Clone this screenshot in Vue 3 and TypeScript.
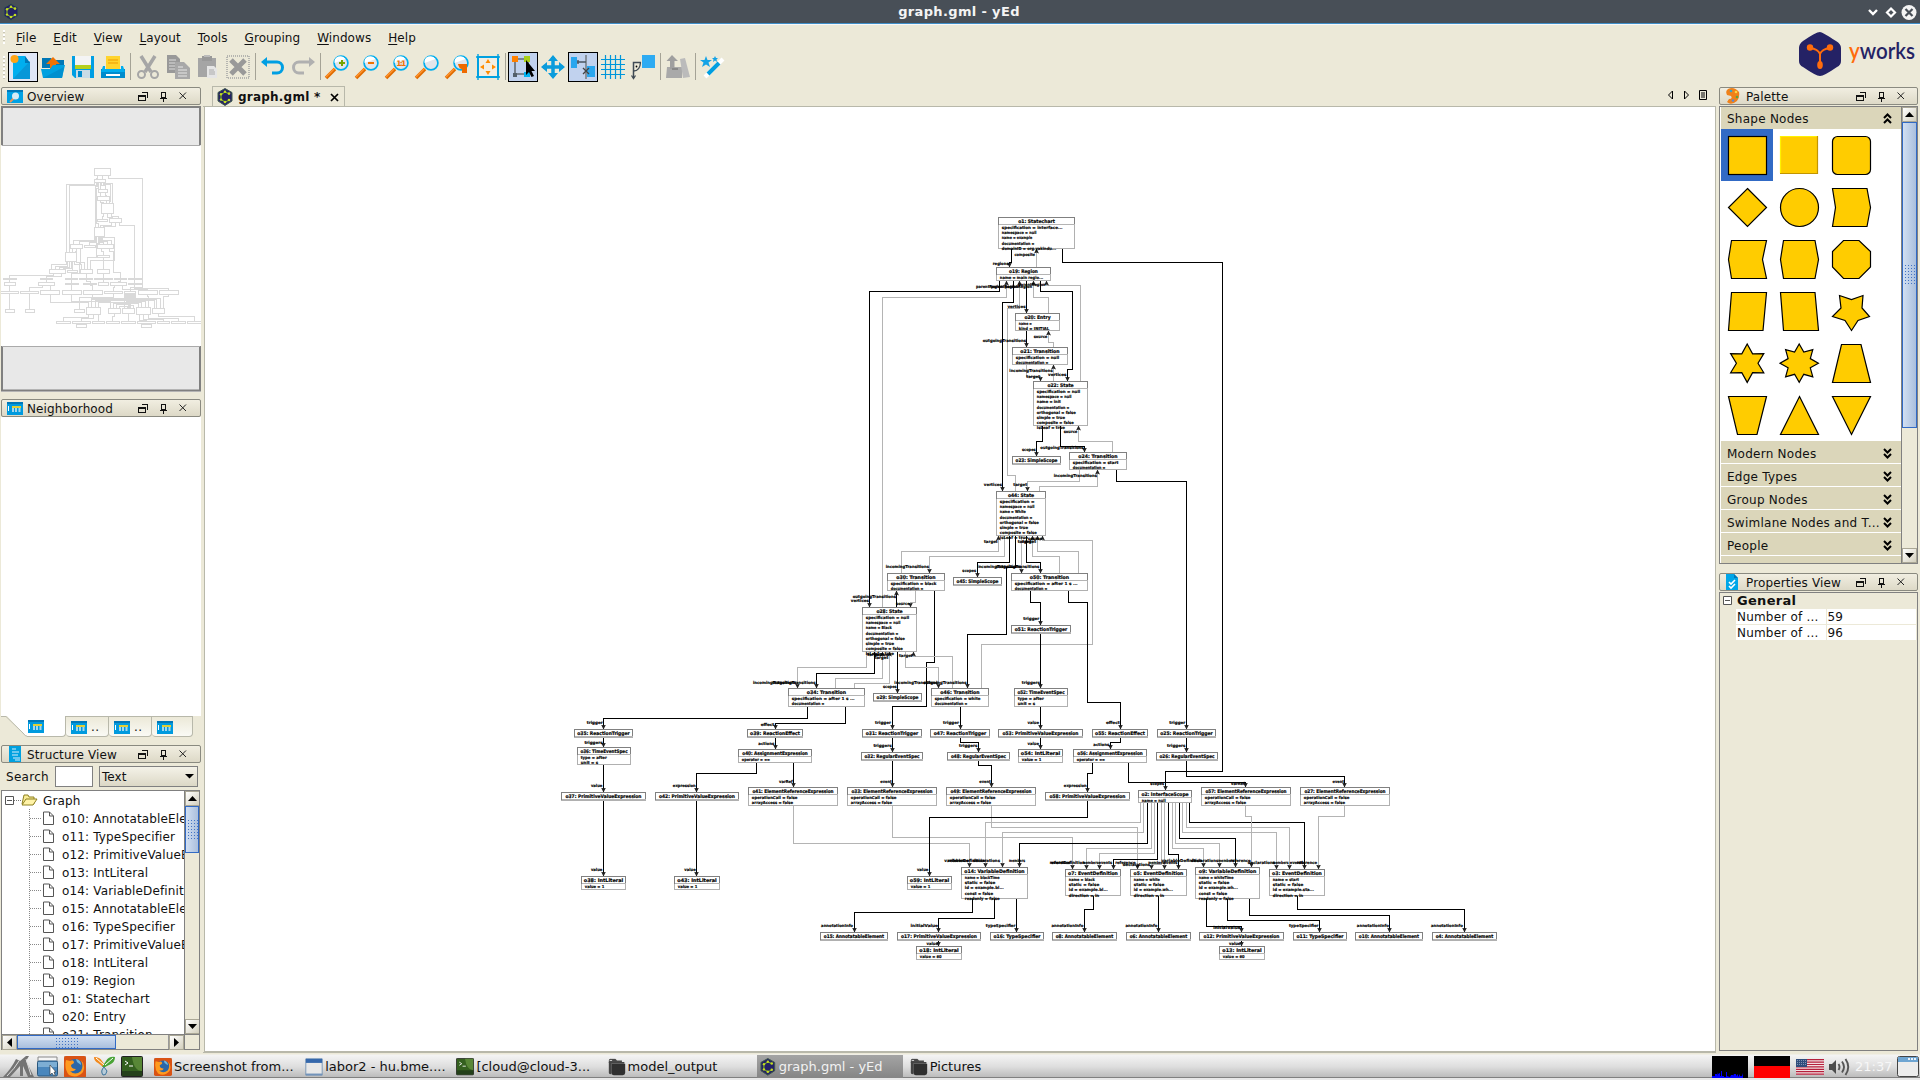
<script setup lang="ts">
interface Cluster {
  ox: number
  oy: number
  sx: number
  nodes: [number, number, number, number, string, string?][]
  edges: string[]
  labels: [string, number, number][]
}

const state = (spec: string, name: string) =>
  `specification = ${spec}|namespace = null|name = ${name}|documentation =|orthogonal = false|simple = true|composite = false|isLeaf = true`
const ref = 'operationCall = false|arrayAccess = false'

// Each cluster keeps its own origin and unit grid; edges marked "k" are containment (black), "g" are references (grey).
const clusters: Cluster[] = [
  {
    ox: 860, oy: 200, sx: 3,
    nodes: [
      [415, 52, 643, 146, 'o1: Statechart', 'specification = interface...|namespace = null|name = example|documentation =|domainID = org.yakindu...'],
      [409, 203, 571, 241, 'o19: Region', 'name = main regio...'],
      [466, 340, 598, 391, 'o20: Entry', 'name =|kind = INITIAL'],
      [457, 442, 622, 493, 'o21: Transition', 'specification = null|documentation ='],
      [520, 544, 682, 676, 'o22: State', state('null', 'init')],
      [457, 770, 602, 793, 'o23: SimpleScope'],
      [628, 757, 799, 808, 'o24: Transition', 'specification = start|documentation ='],
      [409, 874, 556, 1006, 'o44: State', state('', 'White')],
    ],
    edges: [
      'k455,146 455,188 449,188 449,203',
      'k607,146 607,187 1087,187 1087,1714 916,1714 916,1771',
      'k418,241 418,274 28,274 28,1222',
      'k461,241 461,307 427,307 427,874',
      'k500,241 500,340',
      'k541,241 541,274 637,274 637,508 622,508 622,544',
      'k500,391 500,442',
      'k548,676 548,724 529,724 529,770',
      'k601,676 601,739 673,739 673,757',
      'k769,808 769,844 979,844 979,1588',
      'g529,203 529,146',
      'g466,874 466,826 442,826 442,325 479,325 479,241',
      'g565,340 565,292 520,292 520,241',
      'g661,544 661,256 560,256 560,241',
      'g580,442 580,427 565,427 565,391',
      'g500,493 500,529 541,529 541,544',
      'g580,544 580,493',
      'g757,757 757,724 655,724 655,676',
      'g658,808 658,844 502,844 502,874',
      'g538,874 538,859 713,859 713,808',
      'g67,1222 67,292 439,292 439,241',
    ],
    labels: [
      ['composite', 525, 167], ['regions', 446, 195], ['parentRegion', 430, 264], ['parentRegion', 475, 264], ['parentRegion', 516, 264], ['parentRegion', 557, 257],
      ['vertices', 497, 324], ['source', 562, 413], ['outgoingTransitions', 498, 425], ['incomingTransitions', 578, 515], ['vertices', 619, 528], ['target', 540, 533],
      ['source', 652, 698], ['outgoingTransitions', 671, 746], ['scopes', 527, 752], ['incomingTransitions', 711, 830], ['vertices', 426, 857], ['target', 501, 857],
      ['target', 413, 1028], ['source', 545, 1019], ['target', 514, 1028], ['target', 528, 1028],
    ],
  },
  {
    ox: 760, oy: 540, sx: 3,
    nodes: [
      [382, 100, 553, 151, 'o30: Transition', 'specification = black|documentation ='],
      [580, 112, 724, 135, 'o45: SimpleScope'],
      [754, 100, 982, 151, 'o50: Transition', 'specification = after 1 s ...|documentation ='],
      [307, 202, 469, 334, 'o28: State', state('null', 'Black')],
      [754, 256, 931, 280, 'o51: ReactionTrigger'],
      [85, 445, 313, 499, 'o34: Transition', 'specification = after 1 s ...|documentation ='],
      [340, 460, 484, 483, 'o29: SimpleScope'],
      [514, 445, 685, 499, 'o46: Transition', 'specification = white|documentation ='],
      [763, 445, 922, 499, 'o52: TimeEventSpec', 'type = after|unit = s'],
      [307, 568, 484, 592, 'o31: ReactionTrigger'],
      [511, 568, 688, 592, 'o47: ReactionTrigger'],
      [715, 568, 967, 592, 'o53: PrimitiveValueExpression'],
      [997, 568, 1162, 592, 'o55: ReactionEffect'],
      [1192, 568, 1366, 592, 'o25: ReactionTrigger'],
      [304, 637, 487, 661, 'o32: RegularEventSpec'],
      [562, 637, 748, 661, 'o48: RegularEventSpec'],
      [775, 628, 907, 667, 'o54: IntLiteral', 'value = 1'],
      [940, 628, 1159, 667, 'o56: AssignmentExpression', 'operator = =='],
      [1189, 637, 1372, 661, 'o26: RegularEventSpec'],
      [262, 742, 529, 796, 'o33: ElementReferenceExpression', ref],
      [559, 742, 826, 796, 'o49: ElementReferenceExpression', ref],
      [856, 757, 1108, 781, 'o58: PrimitiveValueExpression'],
      [1135, 751, 1294, 787, 'o2: InterfaceScope', 'name = null'],
    ],
    edges: [
      'g424,100 424,34 715,34 715,-14', 'g733,-14 733,49 509,49 509,100', 'k748,-14 748,67 652,67 652,112',
      'k766,-14 766,81 740,81 740,283 622,283 622,445', 'g784,-14 784,100', 'k799,-14 799,67 841,67 841,100',
      'g898,100 898,49 817,49 817,-14', 'g955,100 955,34 832,34 832,-14', 'g664,445 664,313 997,313 997,1 847,1 847,-14',
      'k410,202 410,151', 'g466,151 466,187 451,187 451,202', 'k523,151 523,367 500,367 500,499 397,499 397,568',
      'k811,151 811,187 841,187 841,256', 'k925,151 925,187 982,187 982,487 1081,487 1081,568', 'k841,280 841,445',
      'g319,334 319,382 112,382 112,445', 'k343,334 343,400 169,400 169,445', 'g226,445 226,415 367,415 367,334',
      'g283,445 283,430 388,430 388,334', 'k412,334 412,460', 'g436,334 436,382 535,382 535,445', 'g577,445 577,349 460,349 460,334',
      'k841,499 841,568', 'k601,499 601,568', 'k397,592 397,637', 'k601,592 601,607 655,607 655,637', 'k841,592 841,628',
      'k1081,592 1081,607 1051,607 1051,628', 'k1279,592 1279,637', 'k397,661 397,742', 'k655,661 655,676 694,676 694,742',
      'k997,667 997,700 982,700 982,757', 'k1105,667 1105,727 1457,727 1457,742', 'k1279,661 1279,709 1754,709 1754,742',
    ],
    labels: [
      ['incomingTransitions', 507, 83], ['scopes', 648, 95], ['incomingTransitions', 782, 83], ['outgoingTransitions', 838, 83],
      ['outgoingTransitions', 408, 173], ['vertices', 327, 186], ['source', 449, 194], ['trigger', 838, 240],
      ['target', 363, 347], ['source', 385, 347], ['target', 385, 356], ['target', 458, 350], ['incomingTransitions', 109, 432], ['outgoingTransitions', 167, 432],
      ['scopes', 410, 443], ['incomingTransitions', 533, 432], ['outgoingTransitions', 620, 432], ['triggers', 840, 432],
      ['trigger', 393, 552], ['trigger', 597, 552], ['value', 837, 552], ['effect', 1079, 552], ['trigger', 1276, 552],
      ['triggers', 395, 620], ['triggers', 652, 620], ['value', 837, 614], ['actions', 1048, 617], ['triggers', 1276, 620],
      ['event', 395, 728], ['event', 692, 728], ['expression', 980, 740], ['scopes', 1212, 734], ['varRef', 1454, 734], ['event', 1752, 728],
    ],
  },
  {
    ox: 560, oy: 700, sx: 3,
    nodes: [
      [43, 88, 217, 112, 'o35: ReactionTrigger'],
      [562, 88, 727, 112, 'o39: ReactionEffect'],
      [52, 142, 211, 193, 'o36: TimeEventSpec', 'type = after|unit = s'],
      [535, 148, 754, 187, 'o40: AssignmentExpression', 'operator = =='],
      [4, 277, 256, 301, 'o37: PrimitiveValueExpression'],
      [286, 277, 535, 301, 'o42: PrimitiveValueExpression'],
      [565, 262, 832, 316, 'o41: ElementReferenceExpression', ref],
      [64, 529, 196, 568, 'o38: IntLiteral', 'value = 1'],
      [343, 529, 478, 568, 'o43: IntLiteral', 'value = 1'],
      [1042, 529, 1174, 568, 'o59: IntLiteral', 'value = 1'],
      [1204, 502, 1402, 595, 'o14: VariableDefinition', 'name = blackTime|static = false|id = example.bl...|const = false|readonly = false'],
      [781, 697, 982, 721, 'o15: AnnotatableElement'],
      [1012, 697, 1261, 721, 'o17: PrimitiveValueExpression'],
      [1069, 739, 1204, 778, 'o18: IntLiteral', 'value = 60'],
    ],
    edges: [
      'k742,19 742,55 130,55 130,88', 'k856,19 856,70 646,70 646,88', 'k130,112 130,142', 'k646,112 646,148', 'k130,193 130,277',
      'k130,301 130,529', 'k589,187 589,220 409,220 409,277', 'k700,187 700,262', 'k409,301 409,529',
      'k1237,595 1237,637 883,637 883,697', 'k1303,595 1303,655 1135,655 1135,697', 'k1135,721 1135,739',
      'g700,316 700,430 1228,430 1228,502', 'g997,316 997,412 1537,412 1537,508', 'g1294,316 1294,382 1732,382 1732,508',
      'k1582,301 1582,352 1108,352 1108,529',
    ],
    labels: [
      ['trigger', 128, 72], ['effect', 643, 77], ['triggers', 128, 132], ['actions', 643, 135], ['value', 127, 260], ['expression', 407, 260],
      ['varRef', 698, 248], ['value', 127, 512], ['value', 407, 512], ['value', 1105, 512], ['reference', 1226, 485], ['variableDefinition', 1276, 485],
      ['declarations', 1320, 485], ['members', 1395, 485], ['annotationInfo', 879, 680], ['initialValue', 1134, 680], ['value', 1134, 734],
    ],
  },
  {
    ox: 980, oy: 700, sx: 2.9037,
    nodes: [
      [643, 262, 902, 316, 'o57: ElementReferenceExpression', ref],
      [930, 262, 1190, 316, 'o27: ElementReferenceExpression', ref],
      [248, 508, 408, 586, 'o7: EventDefinition', 'name = black|static = false|id = example.bl...|direction = in'],
      [437, 508, 600, 586, 'o5: EventDefinition', 'name = white|static = false|id = example.wh...|direction = in'],
      [625, 502, 812, 595, 'o9: VariableDefinition', 'name = whiteTime|static = false|id = example.wh...|const = false|readonly = false'],
      [840, 508, 1000, 586, 'o3: EventDefinition', 'name = start|static = false|id = example.sta...|direction = in'],
      [30, 697, 185, 721, 'o16: TypeSpecifier'],
      [210, 697, 397, 721, 'o8: AnnotatableElement'],
      [425, 697, 612, 721, 'o6: AnnotatableElement'],
      [637, 697, 882, 721, 'o12: PrimitiveValueExpression'],
      [910, 697, 1065, 721, 'o11: TypeSpecifier'],
      [1090, 697, 1285, 721, 'o10: AnnotatableElement'],
      [1313, 697, 1500, 721, 'o4: AnnotatableElement'],
      [695, 739, 827, 778, 'o13: IntLiteral', 'value = 60'],
    ],
    edges: [
      'g466,307 466,367 16,367 16,502', 'g475,307 475,397 65,397 65,502', 'k487,307 487,430 114,430 114,502',
      'g497,307 497,445 309,445 309,508', 'g506,307 506,460 347,460 347,508', 'k516,307 516,478 387,478 387,508',
      'g526,307 526,493 497,493 497,508', 'g536,307 536,508', 'k547,307 547,463 577,463 577,508',
      'g559,307 559,445 649,445 649,502', 'g568,307 568,430 695,430 695,502', 'k579,307 579,415 741,415 741,502',
      'g588,307 588,397 860,397 860,508', 'g599,307 599,382 899,382 899,508', 'k608,307 608,367 942,367 942,508',
      'g770,316 770,349 789,349 789,502', 'g1059,316 1059,349 982,349 982,508', 'k106,595 106,697',
      'k330,586 330,628 303,628 303,697', 'k518,586 518,697', 'k657,595 657,679 760,679 760,697',
      'k718,595 718,661 986,661 986,697', 'k782,595 782,646 1190,646 1190,697', 'k921,586 921,628 1406,628 1406,697', 'k760,721 760,739',
    ],
    labels: [
      ['typeSpecifier', 103, 680], ['annotationInfo', 300, 680], ['annotationInfo', 515, 680], ['initialValue', 757, 686], ['typeSpecifier', 983, 680],
      ['annotationInfo', 1187, 680], ['annotationInfo', 1402, 680], ['value', 756, 734],
      ['reference', 262, 491], ['eventDefinition', 305, 491], ['members', 344, 491], ['events', 384, 491], ['reference', 452, 491],
      ['declarations', 494, 499], ['members', 535, 491], ['events', 573, 491], ['variableDefinition', 646, 485], ['declarations', 692, 485],
      ['members', 738, 485], ['reference', 786, 487], ['declarations', 857, 491], ['members', 896, 491], ['events', 939, 491], ['reference', 979, 491],
    ],
  },
]

const snap = (v: number) => Math.floor(v + 0.05) + 0.5
const X = (c: Cluster, v: number) => c.ox + v / c.sx
const Y = (c: Cluster, v: number) => c.oy + v / 3

const nodes = clusters.flatMap(c =>
  c.nodes.map(([a, b, d, e, title, attrs]) => {
    const x = snap(X(c, a)), y = snap(Y(c, b))
    return { x, y, w: snap(X(c, d)) - x, h: snap(Y(c, e)) - y, title, rows: attrs ? attrs.split('|') : [] }
  }),
)
const edges = clusters.flatMap(c =>
  c.edges.map(s => ({
    dark: s[0] === 'k',
    points: s.slice(1).split(' ').map(p => {
      const [a, b] = p.split(',').map(Number)
      return `${snap(X(c, a))},${snap(Y(c, b))}`
    }).join(' '),
  })),
)
const labels = clusters.flatMap(c => c.labels.map(([text, x, y]) => ({ text, x: X(c, x), y: Y(c, y) })))

const menus = ['File', 'Edit', 'View', 'Layout', 'Tools', 'Grouping', 'Windows', 'Help']

const lens = (inner: string) =>
  `<path d="M3 26 12 17" stroke="#e06c00" stroke-width="3.6"/><path d="M3 25 11 17" stroke="#ff9430" stroke-width="1.4"/><circle cx="18" cy="11" r="6.9" fill="#e4e5ea" stroke="#00aeef" stroke-width="1.7"/><path d="M11.5 11a6 6 0 0 1 11-4z" fill="#fff"/>${inner}`

const hexLogo =
  '<path d="M9 .5 16 4.5V13L9 17.5 2 13V4.5z" fill="#242265" stroke="#3f5a4d"/><path d="M12.5 5.5 9 4 5 6.5v5L9 14l3.500-1.500" fill="none" stroke="#8dc21f" stroke-width="1"/><g fill="#c4dd22"><circle cx="13" cy="5.600" r="1.300"/><circle cx="9" cy="3.800" r="1.200"/><circle cx="5" cy="6.300" r="1.200"/><circle cx="5" cy="11.600" r="1.200"/><circle cx="9" cy="14" r="1.300"/><circle cx="13" cy="12" r="1.300"/></g>'

const tools: { sep?: boolean; on?: string; art?: string }[] = [
  { on: 'focus', art: '<path d="M5 4H17L22 11V27H5z" fill="#00aeef"/><path d="M5 27 22 9V27z" fill="#0797d8"/><path d="M17 4V11H22z" fill="#0078b8"/><circle cx="6.500" cy="7" r="4" fill="#ffa415"/>' },
  { art: '<path d="M4 6h9l2 2h11v8H4z" fill="#0077b5"/><path d="M15 5 22 12H18V17H12V12H8z" fill="#ee7203"/><path d="M3 17H12l3-4H27L24 26H5z" fill="#00a1e0"/><path d="M5 26 26 15 24 26z" fill="#0090cf"/>' },
  { art: '<path d="M4 4H26V26H7L4 23z" fill="#009fe3"/><path d="M7 4H23V13H7z" fill="#f4f4f4"/><path d="M7 13H23V17H7z" fill="#b5cf1e"/><path d="M8 18H22V26H8z" fill="#c9dbe6"/><path d="M10 19H14V25H10z" fill="#008ccd"/>' },
  { art: '<path d="M8 4H22V17H8z" fill="#ffd42d"/><path d="M10 8H20M10 11H20" stroke="#ef9b00"/><path d="M3 17H27V26H3z" fill="#008ccd"/><path d="M5 14H7V17H23V14H25L27 20H3z" fill="#00aeef"/><path d="M8 22H22V24H8z" fill="#fff"/>' },
  { sep: true },
  { art: '<g stroke="#a6a6a6" fill="none"><path d="M8 4 18 20M22 4 12 20" stroke-width="3.500"/><circle cx="8.500" cy="22.500" r="3.500" stroke-width="2"/><circle cx="21.500" cy="22.500" r="3.500" stroke-width="2"/></g>' },
  { art: '<path d="M4 3H13L17 7V21H4z" fill="#999"/><path d="M6 8H13M6 11H13M6 14H13M6 17H13" stroke="#ddd"/><path d="M12 10H21L27 16V27H12z" fill="#a8a8a8"/><path d="M15 15H20M15 18H24M15 21H24M15 24H24" stroke="#e6e6e6"/>' },
  { art: '<path d="M5 6H23V25H5z" fill="#a5a5a5"/><path d="M9 4H19V9H9z" fill="#999"/><path d="M11 3H17V5H11z" fill="#bbb"/><path d="M14 14H21L24 17V26H14z" fill="#e5e5e5"/><path d="M16 18H21M16 20H22M16 22H22" stroke="#aaa"/>' },
  { art: '<path d="M4 4H26V26H4z" fill="none" stroke="#b5b5b0" stroke-width="2" stroke-dasharray="1 1"/><path d="M8 8 22 22M22 8 8 22" stroke="#999" stroke-width="5"/>' },
  { sep: true },
  { art: '<path d="M6 10H19a5 5 0 0 1 0 11H14" fill="none" stroke="#009fe3" stroke-width="3"/><path d="M3 10 9 5V15z" fill="#009fe3"/>' },
  { art: '<path d="M24 10H11a5 5 0 0 0 0 11H16" fill="none" stroke="#b0b0b0" stroke-width="3"/><path d="M27 10 21 5V15z" fill="#b0b0b0"/>' },
  { sep: true },
  { art: lens('<path d="M19 8V14M16 11H22" stroke="#76a400" stroke-width="2"/>') },
  { art: lens('<path d="M15 11H21" stroke="#ee7203" stroke-width="2"/>') },
  { art: lens('<text x="18.200" y="14" font-family="DejaVu Sans" font-weight="bold" font-size="7.500" fill="#ee7203" text-anchor="middle" textLength="10">1:1</text>') },
  { art: lens('') },
  { art: lens('<path d="M15 12H24V21H19V17Q16 17 15 12" fill="#ee6a00"/>') },
  { art: '<path d="M5 5H25V25H5z" fill="#f2eee3" stroke="#00a1e0" stroke-width="2"/><path d="M5 2V28M25 2V28M3 5H27M3 25H27" stroke="#00a1e0" stroke-width="1.400"/><g fill="#ff8c00"><path d="M15 7 17.500 11h-5zM15 23 17.500 19h-5zM7 15 11 12.500v5zM23 15 19 12.500v5z"/></g>' },
  { sep: true },
  { on: 'on', art: '<path d="M7 7H20V22H7z" fill="none" stroke="#636b73" stroke-width="1.600"/><path d="M4 4H10V10H4z" fill="#ff8000"/><path d="M16 4H22V10H16z" fill="#a8cf17"/><path d="M5 21H9V25H5z" fill="#53606b"/><path d="M16 20H22V25H16z" fill="#00b2f2"/><path d="M18 8V23L21 20 23.500 25 26 24 23.500 19H27z" fill="#000"/>' },
  { art: '<path d="M15 5V25M5 15H25" stroke="#0a9cdc" stroke-width="3.500"/><path d="M15 3 20 9H10zM15 27 20 21H10zM3 15 9 10V20zM27 15 21 10V20z" fill="#0a9cdc"/>' },
  { on: 'on', art: '<path d="M3 5H9V16H3z" fill="#2aa6ee"/><path d="M19 14H27V25H19z" fill="#2aa6ee"/><path d="M18 3V27" stroke="#87909b" stroke-width="2"/><path d="M9 10H18M10 8V12" stroke="#4a5560" stroke-width="1.400"/><path d="M15 16 21 22M21 16 15 22" stroke="#444" stroke-width="1.300"/>' },
  { art: '<path d="M7.500 3V27M12.500 3V27M17.500 3V27M22.500 3V27M3 7.500H27M3 12.500H27M3 17.500H27M3 22.500H27" stroke="#0096da" stroke-width="1.200"/>' },
  { art: '<path d="M14 3H27V16H14z" fill="#2eabf2"/><path d="M5.500 26V10.500H13" fill="none" stroke="#404b55" stroke-width="1.500"/><path d="M5.500 19Q12 19 12.500 10.500M3.500 23.500 5.500 26.500 7.500 23.500" fill="none" stroke="#404b55" stroke-width="1.300"/><circle cx="8.500" cy="14.500" r=".9"/>' },
  { sep: true },
  { art: '<path d="M4 15H19V26H3z" fill="#a9a9a9"/><path d="M17 7 22 6 27 25 20 26z" fill="#bbb"/><path d="M9 3 15 9H11.500V17H7V9H3.500z" fill="#9f9f9f"/><path d="M9 16H15V18H9z" fill="#888"/>' },
  { sep: true },
  { art: '<path d="M8 4 9.500 8H14L10.500 10.500 12 15 8 12.500 4 15 5.500 10.500 2 8H6.500zM17 4 18 6H20L18.500 7.500 19 10 17 8.500 15 10 15.500 7.500 14 6H16z" fill="#14a3e6"/><path d="M7 25 25 7" stroke="#fff" stroke-width="4"/><path d="M10 22 21 11" stroke="#009ee0" stroke-width="4"/>' },
]

const ctl =
  '<g fill="none" stroke="#111" shape-rendering="crispEdges"><path d="M1.500 7.500H8.500V12.500H1.500zM1 8.500H8M5 4.500H10.500V9.500"/><path d="M24.500 4.500H28.500V9.500H24.500zM23 10.500H30M26.500 11V14M28.500 5V10"/></g><path d="M42.500 4.500 49 11M49 4.500 42.500 11" stroke="#222" fill="none"/>'

const head: Record<string, string> = {
  overview: '<path d="M0 2H16V15H0z" fill="#00a1e4"/><path d="M0 2H16V4H0z" fill="#0077b8"/><path d="M3 14 7 10" stroke="#e8935a" stroke-width="2"/><circle cx="8.500" cy="8" r="3.500" fill="#d6ebf5"/>',
  hood: '<path d="M0 2H16V15H0z" fill="#009ade"/><path d="M0 2H16V4H0z" fill="#0077b8"/><path d="M1.500 6V11" stroke="#fff"/><path d="M6 8V12M9 8V12M12.500 8V12" stroke="#a5d6ec" stroke-width="2"/><path d="M5 7H14" stroke="#e2cf35" stroke-width="2"/>',
  tree: '<path d="M2 0H14V16H2z" fill="#00a1e0"/><path d="M5 3H9M5 6H12M5 9H11M6 12H13M8 14H13" stroke="#8fd4f2" stroke-width="1.300"/>',
  palette: '<path d="M3 1Q9-2 14 4 15 9 12 13 6 18 2 14L4 11Q8 11 6 8L2 7Q0 3 3 1z" fill="#f08119"/><circle cx="6" cy="3" r="1.300" fill="#39a3c8"/><circle cx="11" cy="4" r="1.300" fill="#ffd640"/><circle cx="12" cy="9" r="1.300" fill="#60a33b"/><circle cx="8" cy="12.500" r="1.300" fill="#5a8ad6"/>',
  props: '<path d="M1 0H9L13 4V16H1z" fill="#00a6e8"/><path d="M9 0V4H13z" fill="#0079b8"/><path d="M4 8 6 10 10 6M4 12 6 14 10 10" fill="none" stroke="#fff" stroke-width="1.600"/>',
}

const ngon = (n: number, r1: number, r2: number, start: number) =>
  Array.from({ length: n * 2 }, (_, i) => {
    const r = i % 2 ? r2 : r1, t = ((start + (i * 180) / n) * Math.PI) / 180
    return `${(26.2 + r * Math.cos(t)).toFixed(1)},${(26.2 + r * Math.sin(t)).toFixed(1)}`
  }).join(' ')

const shapes = [
  'rect', 'bevel', 'round',
  '26.500,7.500 45.500,26.500 26.500,45.500 7.500,26.500', 'circle', '7.500,7.500 42,7.500 45.500,26.500 42,45.500 7.500,45.500 10.500,26.500',
  '10.500,7.500 45.500,7.500 41.500,26.500 45.500,45.500 10.500,45.500 7.500,26.500', '10.500,7.500 42,7.500 45.500,26.500 42,45.500 10.500,45.500 7.500,26.500', '18.500,7.500 34,7.500 45.500,18.500 45.500,34 34,45.500 18.500,45.500 7.500,34 7.500,18.500',
  '10.500,7.500 45.500,7.500 42,45.500 7.500,45.500', '7.500,7.500 42,7.500 45.500,45.500 10.500,45.500', '14.500,10.500 26.500,14.500 38,10.500 37,23 44.500,31.500 33,35.500 26.500,45.500 20,35.500 7.500,31.500 16,23',
  ngon(6, 19.2, 10.8, -90), ngon(8, 19.2, 12, -90), '16.500,7.500 36,7.500 45.500,45.500 7.500,45.500',
  '7.500,7.500 45.500,7.500 36,45.500 16.500,45.500', '26.500,7.500 45.500,45.500 7.500,45.500', '7.500,7.500 45.500,7.500 26.500,45.500',
]

const sections = ['Modern Nodes', 'Edge Types', 'Group Nodes', 'Swimlane Nodes and T...', 'People']
const tree = [
  'o10: AnnotatableElement', 'o11: TypeSpecifier', 'o12: PrimitiveValueExpression', 'o13: IntLiteral', 'o14: VariableDefinition', 'o15: AnnotatableElement',
  'o16: TypeSpecifier', 'o17: PrimitiveValueExpression', 'o18: IntLiteral', 'o19: Region', 'o1: Statechart', 'o20: Entry', 'o21: Transition',
]

const fox = '<rect width="22" height="22" fill="#b9b9b9"/><rect x="0" y="0" width="22" height="22" rx="2" fill="#d95314"/><circle cx="11" cy="11" r="8" fill="#2b67a8"/><path d="M2 4 6 5Q10 3 10 7L7 9Q7 13 12 13 10 16 6 15 11 20 17 15 20 10 17 4 22 9 19 16 13 23 5 19 0 13 2 4z" fill="#ff9a1f"/><path d="M12 3Q17 4 17 9L13 6z" fill="#75b9dd"/>'
const term = '<rect x=".5" y=".5" width="21" height="20" rx="1" fill="#34601f" stroke="#222"/><path d="M1 15H21V20H1z" fill="#24401a"/><path d="M11 1H21V15Q13 15 11 1z" fill="#588737"/><path d="M4 5 7 7 4 9M8 10H12" stroke="#fff" fill="none"/>'
const folder = '<path d="M1 3Q1 1 3 1H9L11 3H17V6H1z" fill="#484848"/><path d="M3 0H10M2 3H5" stroke="#eee"/><path d="M4 7H21V18Q21 21 18 21H7Q4 21 4 18z" fill="#303030"/><path d="M1 5V18Q1 20 4 20V7H20V5z" fill="#444"/>'
const launchers = [
  '<path d="M-5 21Q3 13 8 3L12 5 18 0 21 0 18 5 26 21H20L15 10V20H12V10Q5 18 2 21z" fill="#747474"/><path d="M-1 20Q7 12 11 5M18 3 23 19" stroke="#ddd" fill="none"/>',
  '<path d="M1 1H20V9H1z" fill="#f6f6f6" stroke="#888"/><rect x=".5" y="5" width="20" height="15" rx="1.500" fill="#4a87bd" stroke="#28577e"/><path d="M1 6H20V11H1z" fill="#7daed4"/><path d="M13 9V19L15 17 17 20 18 19 17 16H19z" fill="#fff" stroke="#333" stroke-width=".6"/>',
  fox,
  '<path d="M1 1Q7 1 9 5L13 11H10L5 7Q1 5 1 1z" fill="#f28a1e"/><path d="M22 1Q16 0 13 5L9 11H12L18 8Q22 6 22 1z" fill="#4aa436"/><path d="M3 2 11 9M20 2 12 9" stroke="#fff"/><path d="M11 11Q7 15 10 19 13 20 14 15z" fill="#b8ccd9" stroke="#3d749c"/>',
  term,
]
const tasks = [
  { t: 'Screenshot from...', a: fox },
  { t: 'labor2 - hu.bme....', a: '<path d="M1 1H21V21H1z" fill="#e8e8e8" stroke="#6a8cb0"/><path d="M1 1H21V6H1z" fill="#3568ac"/><path d="M1 19H21V21H1z" fill="#7293ba"/>' },
  { t: '[cloud@cloud-3...', a: term },
  { t: 'model_output', a: folder },
  { t: 'graph.gml - yEd', a: `<g transform="scale(1.200)">${hexLogo}</g>` },
  { t: 'Pictures', a: folder },
]
</script>

<template>
  <div class="app">
    <div class="titlebar">
      <svg class="logo" width="18" height="18" viewBox="0 0 18 18" v-html="hexLogo" />
      <b>graph.gml - yEd</b>
      <svg class="winctl" width="54" height="20" viewBox="0 0 54 20">
        <path d="M4 7 8 11 12 7" fill="none" stroke="#fff" stroke-width="2.4" />
        <path d="M26 5.500 30 9.500 26 13.500 22 9.500z" fill="none" stroke="#fff" stroke-width="2.200" />
        <circle cx="44" cy="9.500" r="7.500" fill="#f3f3f3" /><path d="M40.500 6 47.500 13M47.500 6 40.500 13" stroke="#484f57" stroke-width="2.200" />
      </svg>
    </div>

    <div class="top">
      <div class="bars">
        <nav class="menu">
          <span v-for="m in menus" :key="m"><u>{{ m[0] }}</u>{{ m.slice(1) }}</span>
        </nav>
        <div class="toolbar">
          <template v-for="(t, i) in tools" :key="i">
            <i v-if="t.sep" class="sep" />
            <span v-else class="tool" :class="t.on"><svg width="30" height="30" viewBox="0 0 30 30" v-html="t.art" /></span>
          </template>
        </div>
      </div>
      <svg class="brand" width="122" height="50" viewBox="0 0 122 50">
        <path d="M22 2Q24 2 38 11 43 14 43 18V31Q43 35 39 37 26 46 22 46 18 46 5 37 1 35 1 31V18Q1 14 5 11 18 2 22 2z" fill="#242265" />
        <path d="M12 18Q20 19 22 24 24 19 32 18M22 24V36" fill="none" stroke="#ff6c0c" stroke-width="2" />
        <circle cx="12" cy="17.500" r="3.200" fill="#ff6c0c" /><circle cx="32" cy="17.500" r="3.200" fill="#ff6c0c" /><ellipse cx="22" cy="35" rx="2.800" ry="4" fill="#ff6c0c" />
        <text x="51" y="29" textLength="66" lengthAdjust="spacingAndGlyphs"><tspan fill="#ff6c0c">y</tspan><tspan fill="#242265">works</tspan></text>
      </svg>
    </div>

    <main class="work">
      <aside class="left">
        <header class="ph"><svg class="ic" width="16" height="16" v-html="head.overview" /><span>Overview</span><svg class="ctl" width="50" height="16" v-html="ctl" /></header>
        <section class="overview">
          <svg width="200" height="286" viewBox="1 106 200 286">
            <rect x="1" y="106" width="200" height="286" fill="#fff" />
            <path d="M1 106H201V146H1zM1 346H201V392H1z" fill="#e8e8e8" />
            <path d="M2 145V107H200V145M2 346V390.500H200V346" fill="none" stroke="#808080" stroke-width="2" />
            <path d="M2 145.500H200M2 346.500H200" stroke="#aaa" />
            <g class="mini" transform="translate(-119.480 121.890) scale(.2143)">
              <polyline v-for="(e, i) in edges" :key="i" :points="e.points" />
              <rect v-for="n in nodes" :key="n.title" :x="n.x" :y="n.y" :width="n.w" :height="n.h" />
            </g>
          </svg>
        </section>
        <header class="ph"><svg class="ic" width="16" height="16" v-html="head.hood" /><span>Neighborhood</span><svg class="ctl" width="50" height="16" v-html="ctl" /></header>
        <section class="hood" />
        <div class="tabs">
          <svg class="slope" width="26" height="21" viewBox="0 0 26 21"><path d="M0 0H6L22 17Q25 20.500 28 20.500V0" fill="#fff" /><path d="M0 .5H5L22 17Q24 20.500 27 20.500" fill="none" stroke="#b8b8aa" /></svg>
          <span v-for="(d, i) in ['', '..', '..', '']" :key="i" class="tab" :class="{ cur: !i }"><svg width="16" height="16" v-html="head.hood" />{{ d }}</span>
        </div>
        <header class="ph"><svg class="ic" width="16" height="16" v-html="head.tree" /><span>Structure View</span><svg class="ctl" width="50" height="16" v-html="ctl" /></header>
        <div class="search"><label>Search</label><i class="field" /><span class="combo">Text<svg width="9" height="5"><path d="M0 0H9L4.500 4.500z" /></svg></span></div>
        <div class="tree">
          <div class="rows">
            <div class="row root">
              <svg width="41" height="18" viewBox="0 0 41 18"><path d="M3.500 5.500H11.500V13.500H3.500zM5 9.500H10" fill="#fff" stroke="#555" /><path d="M12 9.500H19" stroke="#777" stroke-dasharray="1 1" /><path d="M20 13 22 4H26L27 6H32V13z" fill="#f9ec96" stroke="#8e8020" /><path d="M20 14 24 8H35L31 14z" fill="#fff3a8" stroke="#8e8020" /></svg><span>Graph</span>
            </div>
            <div v-for="r in tree" :key="r" class="row">
              <svg width="60" height="18" viewBox="0 0 60 18"><path d="M27.500 0V18M28 9.500H40" stroke="#888" stroke-dasharray="1 1" /><path d="M41.500 3H47.500L51.500 7V15.500H41.500z" fill="#fff" stroke="#555" /><path d="M47.500 3V7H51.500" fill="none" stroke="#555" /></svg><span>{{ r }}</span>
            </div>
          </div>
          <div class="vbar">
            <i class="btn"><svg width="9" height="5"><path d="M0 5H9L4.500 0z" /></svg></i><i class="thumb"><b /></i><i class="rest" /><i class="btn"><svg width="9" height="5"><path d="M0 0H9L4.500 5z" /></svg></i>
          </div>
          <div class="hbar">
            <i class="btn"><svg width="5" height="9"><path d="M5 0V9L0 4.500z" /></svg></i><i class="thumb"><b /></i><i class="rest" /><i class="btn"><svg width="5" height="9"><path d="M0 0V9L5 4.500z" /></svg></i><i class="corner" />
          </div>
        </div>
      </aside>

      <section class="doc">
        <div class="doctabs">
          <span class="doctab"><svg width="18" height="18" viewBox="0 0 18 18" v-html="hexLogo" /><b>graph.gml *</b><svg class="x" width="9" height="9"><path d="M1 1 8 8M8 1 1 8" stroke="#000" stroke-width="1.700" /></svg></span>
          <svg class="docctl" width="42" height="12" viewBox="0 0 42 12"><path d="M5.500 2V10L1.500 6zM17.500 2V10L21.500 6z" fill="none" stroke="#000" /><path d="M32.500 1.500H39.500V10.500H32.500zM34 4H38M34 6H38M34 8H38" fill="none" stroke="#000" /></svg>
        </div>
        <svg class="canvas" width="1510" height="944" viewBox="205 107 1510 944">
          <defs><marker id="tip" markerUnits="userSpaceOnUse" markerWidth="6" markerHeight="6" refX="5" refY="2.500" orient="auto"><path d="M0 0 5 2.500 0 5 1 2.500z" fill="#222" /></marker></defs>
          <polyline v-for="(e, i) in edges" :key="'e' + i" class="edge" :class="{ dark: e.dark }" :points="e.points" marker-end="url(#tip)" />
          <g v-for="n in nodes" :key="n.title">
            <rect class="box" :x="n.x" :y="n.y" :width="n.w" :height="n.h" />
            <rect class="cap" :x="n.x" :y="n.y" :width="n.w" :height="n.rows.length ? 7 : n.h - 1" />
            <path v-if="n.rows.length" class="rule" :d="`M${n.x} ${n.y + 7}h${n.w}`" />
            <path v-else class="rule" :d="`M${n.x} ${n.y + n.h - 1}h${n.w}`" />
            <text class="ttl" :x="n.x + n.w / 2" :y="n.y + 5.200" text-anchor="middle" :textLength="n.title.length * 2.620" lengthAdjust="spacingAndGlyphs">{{ n.title }}</text>
            <text v-for="(r, i) in n.rows" :key="i" class="attr" :x="n.x + 3.300" :y="n.y + 11.600 + i * 5.150" :textLength="r.length * 2.170" lengthAdjust="spacingAndGlyphs">{{ r }}</text>
          </g>
          <text v-for="(l, i) in labels" :key="'l' + i" class="attr" :x="l.x" :y="l.y" text-anchor="end" :textLength="l.text.length * 2.280" lengthAdjust="spacingAndGlyphs">{{ l.text }}</text>
        </svg>
      </section>

      <aside class="right">
        <header class="ph"><svg class="ic" width="16" height="16" v-html="head.palette" /><span>Palette</span><svg class="ctl" width="50" height="16" v-html="ctl" /></header>
        <div class="palette">
          <div class="plist">
            <div class="sec first">Shape Nodes<svg width="9" height="11"><path d="M1 5 4.500 1.500 8 5M1 10 4.500 6.500 8 10" /></svg></div>
            <div class="shapes">
              <span v-for="(s, i) in shapes" :key="i" :class="{ sel: !i }">
                <svg width="52" height="52" viewBox="0 0 52 52">
                  <rect v-if="s === 'rect'" x="7.500" y="7.500" width="38" height="38" />
                  <g v-else-if="s === 'bevel'"><rect x="7" y="7" width="38" height="38" stroke="none" /><path d="M7.500 44V7.500H44" stroke="#fff200" fill="none" /><path d="M44.500 7V44.500H7" stroke="#c29500" fill="none" /></g>
                  <rect v-else-if="s === 'round'" x="7.500" y="7.500" width="38" height="38" rx="5" />
                  <circle v-else-if="s === 'circle'" cx="26.500" cy="26.500" r="19" />
                  <polygon v-else :points="s" />
                </svg>
              </span>
            </div>
            <div v-for="s in sections" :key="s" class="sec">{{ s }}<svg width="9" height="11"><path d="M1 1 4.500 4.500 8 1M1 6 4.500 9.500 8 6" /></svg></div>
            <div class="sec tail" />
          </div>
          <div class="vbar">
            <i class="btn"><svg width="9" height="5"><path d="M0 5H9L4.500 0z" /></svg></i><i class="thumb"><b /></i><i class="rest" /><i class="btn"><svg width="9" height="5"><path d="M0 0H9L4.500 5z" /></svg></i>
          </div>
        </div>
        <header class="ph"><svg class="ic" width="16" height="16" v-html="head.props" /><span>Properties View</span><svg class="ctl" width="50" height="16" v-html="ctl" /></header>
        <div class="props">
          <div class="general"><svg width="9" height="9"><path d="M.5.5H8.500V8.500H.5zM2 4.500H7" fill="#fff" stroke="#555" /></svg><b>General</b></div>
          <div class="prow"><span>Number of ...</span><span>59</span></div>
          <div class="prow"><span>Number of ...</span><span>96</span></div>
        </div>
      </aside>
    </main>

    <footer class="taskbar">
      <div class="launch"><svg v-for="(l, i) in launchers" :key="i" width="22" height="21" viewBox="0 0 22 21" v-html="l" /></div>
      <span v-for="t in tasks" :key="t.t" class="task" :class="{ active: t.t.startsWith('graph') }"><svg width="18" height="18" viewBox="0 0 22 22" v-html="t.a" />{{ t.t }}</span>
      <div class="tray">
        <svg width="36" height="22"><rect width="36" height="22" /><path d="M0 22V20H3V18H5V20L6 16V18L8 17V20H9V15H10V20H12V21H14V16H15V20L18 21 19 19H21V20L22 18H24V20L26 18V21L28 18V20H30V17L31 20V22z" fill="#00f" /></svg>
        <svg width="36" height="22"><rect width="36" height="22" /><rect y="10" width="36" height="12" fill="#f00" /></svg>
        <svg width="28" height="16" viewBox="0 0 28 16"><rect width="28" height="16" fill="#f2dfe1" /><path d="M0 .7H28M0 3.100H28M0 5.500H28M0 7.900H28M0 10.300H28M0 12.700H28M0 15.200H28" stroke="#b5203c" stroke-width="1.200" /><rect width="11" height="8" fill="#2f4d7c" /><path d="M1 1.500H11M1 3.500H11M1 5.500H11" stroke="#8094b3" stroke-dasharray="1 1" /></svg>
        <svg width="21" height="20" viewBox="0 0 21 20"><path d="M0 7H3L7 3V17L3 13H0z" fill="#4c4c4c" /><path d="M9.500 7Q11.500 10 9.500 13M13 4.500Q17 10 13 15.500M16.500 2Q22 10 16.500 18" fill="none" stroke="#555" stroke-width="1.900" /></svg>
        <time>21:37</time>
        <svg width="22" height="22"><rect x=".5" y=".5" width="21" height="20" rx="2" fill="#ececec" stroke="#444" /><path d="M1 1H21V6H1z" fill="#6ea5d2" /><path d="M11 3H20" stroke="#e8f1fa" stroke-width="2" stroke-dasharray="2 1" /></svg>
      </div>
    </footer>
  </div>
</template>

<style>
body { margin: 0; overflow: hidden; }
</style>

<style scoped>
.app { width: 1920px; height: 1080px; display: flex; flex-direction: column; background: #ece9d8; font: 12px "DejaVu Sans", sans-serif; letter-spacing: .05px; color: #111; }
.app * { box-sizing: border-box; }
svg { display: block; flex: none; }
.titlebar { height: 25px; background: #484f57; border-bottom: 1px solid #f8f8f8; box-shadow: inset 0 -1px #3f8fc8; display: flex; justify-content: space-between; align-items: center; color: #f4f4f4; }
.titlebar b { font-size: 13px; letter-spacing: .35px; padding-bottom: 2px; margin-left: 33px; }
.logo { margin-left: 2px; }
.winctl { margin: 1px 1px 0 0; }
.top { height: 61px; display: flex; justify-content: space-between; }
.menu { height: 26px; display: flex; padding: 6px 0 0 16px; gap: 16.900px; letter-spacing: .08px; background: repeating-linear-gradient(#fff 0 2px, #c9c6b6 2px 3px, #ece9d8 3px 4px) 3px 5px / 2px 14px no-repeat; }
.menu u { text-underline-offset: 2px; }
.toolbar { display: flex; height: 32px; padding: 1px 0 0 8px; background: repeating-linear-gradient(#fff 0 2px, #c9c6b6 2px 3px, #ece9d8 3px 4px) 3px 5px / 2px 23px no-repeat; }
.tool { width: 30px; height: 30px; }
.tool.focus { background: #dfe6f6; box-shadow: inset 0 0 0 1px #000; }
.tool.on { background: #c1d2ee; box-shadow: inset 0 0 0 1px #000; }
.sep { width: 5px; height: 27px; margin-top: 1px; background: linear-gradient(#a5a396, #a5a396) 2px 0 / 1px 100% no-repeat; }
.brand { margin: 5px 0 0; }
.brand text { font: 600 22px "Lato", sans-serif; letter-spacing: 0; }
.work { height: 967px; display: flex; }
.left { width: 203px; padding: 1px 2px 0 1px; display: flex; flex-direction: column; }
.right { width: 201px; padding: 1px 2px 0 0; margin-left: 3px; display: flex; flex-direction: column; }
.ph { height: 18px; flex: none; border: 1px solid #8a8a80; border-radius: 2px; background: linear-gradient(#f1eee1, #ddd9c7); display: flex; align-items: center; padding-left: 5px; }
.ph span { margin-left: 4px; flex: 1; white-space: nowrap; font-size: 12px; letter-spacing: .13px; line-height: 16px; padding-top: 1px; }
.ctl { margin-right: 13px; }
.right .ctl { margin-right: 12px; }
.right .ph span { margin-left: 5px; }
.overview { height: 286px; margin: 1px 0 7px; }
.mini polyline, .mini rect { fill: none; stroke: #d9d9d9; vector-effect: non-scaling-stroke; stroke-width: 1px; shape-rendering: crispEdges; }
.mini rect { fill: #fff; }
.hood { height: 299px; background: #fff; }
.tabs { display: flex; height: 29px; padding-bottom: 8px; }
.tab { width: 43px; display: flex; align-items: center; border: 1px solid #b8b8aa; border-left: 0; border-radius: 0 0 4px 4px; padding-left: 5px; gap: 4px; letter-spacing: .5px; background: linear-gradient(#ece9d8, #fafaf5); }
.tab.cur { width: 39px; padding-left: 1px; border-top: 0; border-radius: 0 0 4px 0; background: #fff; }
.tab:last-child { width: 41px; }
.search { height: 27px; display: flex; align-items: center; padding: 3px 2px 4px 5px; }
.search label { width: 49px; letter-spacing: .3px; padding-top: 1px; }
.field { width: 38px; height: 21px; background: #fff; border: 1px solid #808080; }
.combo { margin-left: 6px; width: 99px; height: 21px; border: 1px solid #808080; background: linear-gradient(#f4f2e8, #dcd8c6); display: flex; align-items: center; justify-content: space-between; padding: 1px 3px 0 2px; }
.tree { height: 260px; border: 1px solid #808080; margin: 0 1px 0 0; background: #fff; display: grid; grid-template-columns: 1fr 15px; grid-template-rows: 1fr 15px; }
.rows { overflow: hidden; height: 243px; }
.row { height: 18px; display: flex; align-items: center; white-space: nowrap; letter-spacing: .15px; }
.row span { padding-top: 2px; }
.vbar { display: flex; flex-direction: column; border-left: 1px solid #808080; background: #ece9d8; overflow: hidden; }
.hbar { grid-column: 1 / 3; display: flex; border-top: 1px solid #808080; background: #ece9d8; }
.btn { width: 15px; height: 15px; flex: none; display: flex; align-items: center; justify-content: center; background: linear-gradient(135deg, #fff, #d3cfbd); border: 1px solid #aaa796; }
.thumb { background: linear-gradient(90deg, #d1dff2, #aabfdd); border: 1px solid #316ac5; display: flex; align-items: center; justify-content: center; }
.thumb b { background: radial-gradient(circle, #4273c5 .6px, transparent .8px) 0 0 / 3px 3px; width: 11px; height: 22px; }
.tree .vbar .thumb { height: 47px; }
.rest { flex: 1; }
.hbar .thumb { width: 99px; background: linear-gradient(#d1dff2, #aabfdd); }
.hbar .thumb b { width: 23px; height: 11px; }
.hbar .rest { border-right: 1px solid #999; }
.corner { width: 15px; border-left: 1px solid #808080; }
.doc { width: 1513px; display: flex; flex-direction: column; border-bottom: 1px solid #b8b8aa; height: 967px; }
.doctabs { height: 21px; display: flex; justify-content: space-between; border-bottom: 1px solid #b8b8aa; padding-left: 9px; }
.doctab { width: 133px; height: 21px; border: 1px solid #b8b8aa; border-bottom: 0; background: #ece9d8; display: flex; align-items: center; padding-left: 3px; font-size: 12px; }
.doctab b { margin: 0 10px 0 4px; letter-spacing: .22px; white-space: nowrap; }
.docctl { margin: 3px 7px 0 0; }
.canvas { background: #fff; outline: 1px solid #b8b8aa; margin-left: 2px; }
.edge { fill: none; stroke: #b4b4b4; stroke-width: 1; shape-rendering: crispEdges; }
.edge.dark { stroke: #000; }
.box { fill: #fff; stroke: #b0b0b0; shape-rendering: crispEdges; }
.cap { fill: none; stroke: #808080; shape-rendering: crispEdges; }
.rule { stroke: #b4b4b4; shape-rendering: crispEdges; }
.ttl { font: bold 4.900px "DejaVu Sans", sans-serif; letter-spacing: 0; stroke: #000; stroke-width: .2px; fill: #000; }
.attr { font: bold 4px "DejaVu Sans", sans-serif; letter-spacing: 0; stroke: #000; stroke-width: .16px; fill: #000; }
.palette { height: 458px; margin: 1px 0 9px; border: 1px solid #808080; display: flex; background: #dbd6ba; }
.plist { flex: 1; border-left: 1px solid #fff; overflow: hidden; }
.sec { height: 23px; border-bottom: 1px solid #fff; background: #dbd6ba; padding: 3px 11px 0 6px; display: flex; align-items: center; justify-content: space-between; white-space: nowrap; letter-spacing: .25px; }
.sec.first { height: 22px; border: 0; padding: 1px 9px 0 6px; }
.sec:not(.first) { padding-right: 9px; }
.sec svg path { fill: none; stroke: #000; stroke-width: 2; }
.shapes { display: flex; flex-wrap: wrap; background: #fff; height: 312px; width: 100%; }
.shapes span { width: 52px; height: 52px; }
.shapes svg { fill: #fc0; stroke: #000; stroke-width: 1.200; }
.sel { background: #316ac5; }
.palette .vbar { width: 16px; }
.palette .thumb { height: 306px; }
.props { height: 459px; margin-top: 1px; border: 1px solid #808080; }
.general { height: 16px; display: flex; align-items: center; padding: 0 0 1px 3px; }
.general b { font-size: 13px; margin-left: 5px; letter-spacing: .3px; }
.prow { display: flex; gap: 1px; margin: 0 1px 1px 16px; }
.prow span { flex: 1; height: 15px; line-height: 17px; background: #fff; padding-left: 1px; letter-spacing: .2px; white-space: nowrap; }
.taskbar { height: 27px; margin-top: 0; display: flex; align-items: center; background: linear-gradient(#ece9d8 0 1px, #f4f4f4 2px, #dedede 50%, #bcbcbc 24px, #808080 24px 25px, #e8e8e8 25px); font-size: 13px; letter-spacing: 0; }
.launch { width: 152px; display: flex; gap: 6.500px; padding-left: 8px; }
.launch svg:first-child { overflow: visible; }
.launch svg:nth-child(n + 3) { position: relative; left: -1px; }
.task { width: 151.200px; height: 23px; display: flex; align-items: center; gap: 2px; padding-left: 2px; white-space: nowrap; }
.active { width: 146px; margin-right: 5px; background: linear-gradient(#a4a4a4, #858585); color: #f2f2f2; }
.tray { margin-left: auto; margin-right: 1px; display: flex; align-items: center; gap: 5px; }
.tray svg:nth-child(-n + 2) { margin-right: 1px; }
.tray time { color: #f7f7f7; width: 37px; text-align: center; white-space: nowrap; }
</style>
